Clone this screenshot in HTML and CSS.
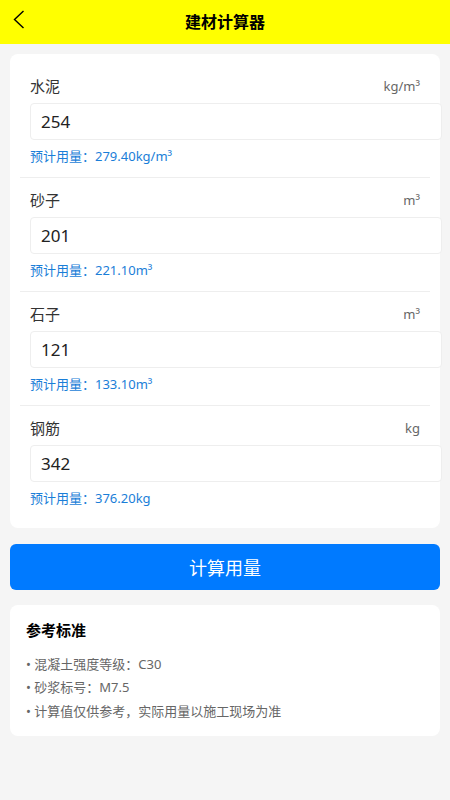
FILE: index.html
```html
<!DOCTYPE html>
<html lang="zh-CN">
<head>
<meta charset="utf-8">
<title>建材计算器</title>
<link rel="stylesheet" href="styles.css">
</head>
<body>
<header class="nav">
  <span class="back"><svg width="12" height="19" viewBox="0 0 12 19"><path d="M10.5 1 L1.5 9.5 L10.5 18" fill="none" stroke="#000" stroke-width="1.4"/></svg></span>
  <h1 class="title">建材计算器</h1>
</header>
<main class="page">
  <section class="card">
    <div class="item">
      <div class="row"><span class="label">水泥</span><span class="unit">kg/m³</span></div>
      <input class="field" type="text" value="254">
      <div class="result">预计用量：279.40kg/m³</div>
    </div>
    <div class="item">
      <div class="row"><span class="label">砂子</span><span class="unit">m³</span></div>
      <input class="field" type="text" value="201">
      <div class="result">预计用量：221.10m³</div>
    </div>
    <div class="item">
      <div class="row"><span class="label">石子</span><span class="unit">m³</span></div>
      <input class="field" type="text" value="121">
      <div class="result">预计用量：133.10m³</div>
    </div>
    <div class="item">
      <div class="row"><span class="label">钢筋</span><span class="unit">kg</span></div>
      <input class="field" type="text" value="342">
      <div class="result">预计用量：376.20kg</div>
    </div>
  </section>
  <button class="calc">计算用量</button>
  <section class="ref">
    <h2 class="ref-title">参考标准</h2>
    <p class="ref-line">• 混凝土强度等级：C30</p>
    <p class="ref-line">• 砂浆标号：M7.5</p>
    <p class="ref-line">• 计算值仅供参考，实际用量以施工现场为准</p>
  </section>
</main>
</body>
</html>
```

FILE: styles.css
```css
* { margin: 0; padding: 0; }
html, body {
  background: #f5f5f5;
  font-family: "Noto Sans", "Noto Sans CJK SC", sans-serif;
}
body { width: 450px; min-height: 800px; }
.nav {
  height: 44px;
  background: #ffff00;
  display: flex;
  align-items: center;
  justify-content: center;
  position: relative;
}
.back {
  position: absolute;
  left: 13px;
  top: 10px;
  width: 12px;
  height: 19px;
  display: block;
}
.back svg { display: block; }
.title {
  font-size: 16px;
  font-weight: bold;
  color: #000;
  line-height: 22px;
}
.page {
  padding: 10px;
}
.card {
  background: #fff;
  border-radius: 8px;
  padding: 10px 0;
}
.item {
  margin: 0 10px;
  padding: 12px 10px;
  border-bottom: 1px solid #eeeeee;
}
.item:last-child {
  border-bottom: none;
  padding-bottom: 11px;
}
.row {
  display: flex;
  justify-content: space-between;
  align-items: center;
  height: 19px;
}
.label {
  font-size: 15px;
  color: #333;
}
.unit {
  font-size: 13px;
  color: #666;
}
.field {
  display: block;
  margin-top: 8px;
  width: 100%;
  box-sizing: content-box;
  padding: 8px 10px;
  height: 19px;
  line-height: 19px;
  border: 1px solid #eeeeee;
  border-radius: 4px;
  font-family: "Noto Sans", "Noto Sans CJK SC", sans-serif;
  font-size: 17px;
  color: #222;
  background: #fff;
  outline: none;
}
.result {
  margin-top: 7px;
  font-size: 13px;
  line-height: 18px;
  color: #1a7ed8;
}
.calc {
  display: block;
  width: 100%;
  height: 46px;
  margin-top: 16px;
  border: none;
  border-radius: 6px;
  background: #007aff;
  color: #fff;
  font-family: "Noto Sans", "Noto Sans CJK SC", sans-serif;
  font-size: 18px;
}
.ref {
  margin-top: 15px;
  background: #fff;
  border-radius: 8px;
  padding: 15px 16px 13px;
}
.ref-title {
  font-size: 15px;
  font-weight: bold;
  color: #000;
  line-height: 21px;
  margin-bottom: 12px;
}
.ref-line {
  font-size: 13px;
  line-height: 23.4px;
  color: #666;
}
```
